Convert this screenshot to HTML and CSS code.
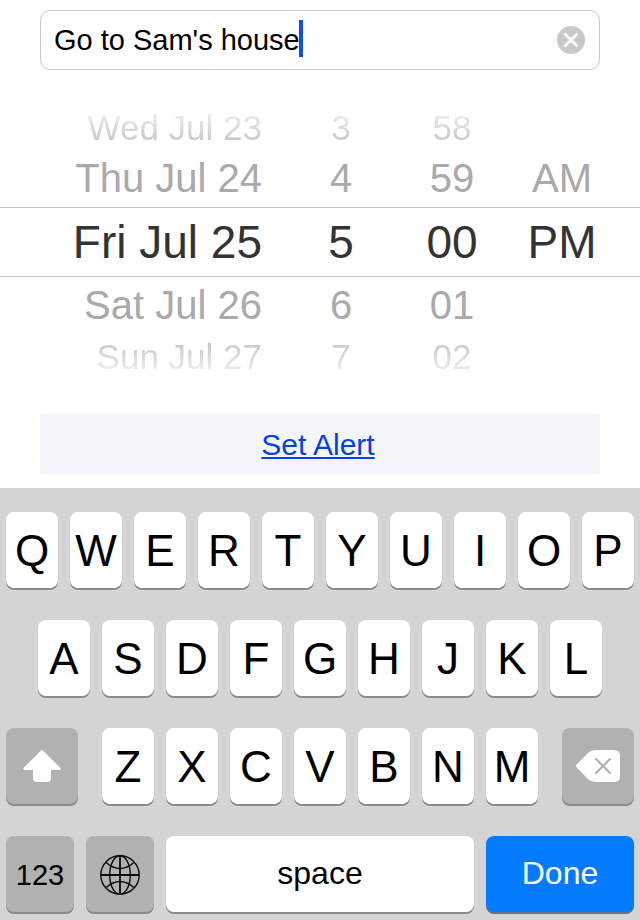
FILE: index.html
```html
<!DOCTYPE html>
<html lang="en">
<head>
<meta charset="utf-8">
<meta name="viewport" content="width=device-width, initial-scale=1">
<title>Reminder</title>
<link rel="stylesheet" href="styles.css">
</head>
<body>
<main class="form">
  <div class="field">
    <input class="field-input" type="text" aria-label="Reminder" value="Go to Sam's house">
    <span class="caret"></span>
    <button class="clear" type="button" aria-label="Clear text">
      <svg width="28" height="28" viewBox="0 0 28 28"><circle cx="14" cy="14" r="14" fill="#c8c8c8"/><path d="M7.500 7.500 20.500 20.500M20.500 7.500 7.500 20.500" stroke="#fff" stroke-width="2.800"/></svg>
    </button>
  </div>

  <div class="picker" role="group" aria-label="Date and time">
    <div class="wheel wheel-date">
      <button type="button" class="far far-top">Wed Jul 23</button>
      <button type="button" class="near">Thu Jul 24</button>
      <button type="button" class="current">Fri Jul 25</button>
      <button type="button" class="near">Sat Jul 26</button>
      <button type="button" class="far far-bottom">Sun Jul 27</button>
    </div>
    <div class="wheel">
      <button type="button" class="far far-top">3</button>
      <button type="button" class="near">4</button>
      <button type="button" class="current">5</button>
      <button type="button" class="near">6</button>
      <button type="button" class="far far-bottom">7</button>
    </div>
    <div class="wheel">
      <button type="button" class="far far-top">58</button>
      <button type="button" class="near">59</button>
      <button type="button" class="current">00</button>
      <button type="button" class="near">01</button>
      <button type="button" class="far far-bottom">02</button>
    </div>
    <div class="wheel">
      <span class="far"></span>
      <button type="button" class="near">AM</button>
      <button type="button" class="current">PM</button>
    </div>
  </div>

  <div class="alert"><a href="#alert">Set Alert</a></div>
</main>

<section class="keyboard" aria-label="Keyboard">
  <div class="row">
    <button class="key">Q</button><button class="key">W</button><button class="key">E</button><button class="key">R</button><button class="key">T</button><button class="key">Y</button><button class="key">U</button><button class="key">I</button><button class="key">O</button><button class="key">P</button>
  </div>
  <div class="row row-home">
    <button class="key">A</button><button class="key">S</button><button class="key">D</button><button class="key">F</button><button class="key">G</button><button class="key">H</button><button class="key">J</button><button class="key">K</button><button class="key">L</button>
  </div>
  <div class="row row-lower">
    <button class="key key-gray key-shift" aria-label="Shift">
      <svg width="38" height="32" viewBox="0 0 38 32"><path d="M18 .600Q19-.400 20 .600L37.400 17.800Q38.400 19.500 36.500 20H28V28Q28 32 24 32H14Q10 32 10 28V20H1.500Q-.400 19.500 .600 17.800Z" fill="#fff"/></svg>
    </button>
    <button class="key">Z</button><button class="key">X</button><button class="key">C</button><button class="key">V</button><button class="key">B</button><button class="key">N</button><button class="key">M</button>
    <button class="key key-gray key-delete" aria-label="Delete">
      <svg width="44" height="32" viewBox="0 0 44 32"><path d="M.700 14.500 12 3Q15 0 19 0H38Q44 0 44 6V26Q44 32 38 32H19Q15 32 12 29L.700 17.500Q-.500 16 .700 14.500Z" fill="#fff"/><path d="M20 9 34 23M34 9 20 23" stroke="#b1b1b1" stroke-width="2.200" stroke-linecap="round"/></svg>
    </button>
  </div>
  <div class="row row-bottom">
    <button class="key key-gray key-word">123</button>
    <button class="key key-gray" aria-label="Next keyboard">
      <svg width="40" height="40" viewBox="0 0 40 40" fill="none" stroke="#0a0a0a" stroke-width="1.400"><circle cx="20" cy="20" r="19.200"/><ellipse cx="20" cy="20" rx="10.300" ry="19.200"/><path d="M20 1V39M1 20H39" stroke-width="1.800"/><path d="M6 7.500Q20 19.500 34 7.500M6 32.500Q20 20.500 34 32.500"/></svg>
    </button>
    <button class="key key-word key-raised">space</button>
    <button class="key key-word key-raised key-done">Done</button>
  </div>
</section>
</body>
</html>
```
FILE: styles.css
```css
* {
  box-sizing: border-box;
}

body {
  margin: 0;
  min-height: 100vh;
  display: flex;
  flex-direction: column;
  background: #fff;
  color: #000;
  font-family: "Liberation Sans", Arial, sans-serif;
}

button,
input {
  font-family: inherit;
  color: inherit;
  border: 0;
  padding: 0;
  margin: 0;
  background: none;
}

svg {
  display: block;
}

.form {
  padding: 10px 0 14px;
}

.field {
  position: relative;
  display: flex;
  align-items: center;
  height: 60px;
  margin: 0 40px;
  padding: 0 14px 0 13px;
  border: 1px solid #c8c8c8;
  border-radius: 10px;
}

.field-input {
  flex: 1;
  min-width: 0;
  height: 56px;
  font-size: 29px;
  outline: 0;
}

.caret {
  position: absolute;
  left: 258px;
  top: 9px;
  width: 4px;
  height: 37px;
  background: #1450dc;
}

.picker {
  display: grid;
  grid-template-columns: 262fr 158fr 64fr 156fr;
  margin-top: 35px;
}

.wheel {
  display: flex;
  flex-direction: column;
  white-space: nowrap;
}

.wheel > * {
  display: flex;
  align-items: center;
  justify-content: center;
}

.wheel-date > * {
  justify-content: flex-end;
}

.far {
  height: 45px;
  font-size: 35px;
}

.far-top {
  color: transparent;
  background: linear-gradient(#e9e9e9 25%, #c8c8c8 80%);
  background-clip: text;
}

.far-bottom {
  color: transparent;
  background: linear-gradient(#c8c8c8 20%, #e9e9e9 75%);
  background-clip: text;
}

.near {
  height: 57px;
  font-size: 40px;
  color: #aaa;
}

.current {
  height: 70px;
  font-size: 46px;
  color: #333;
  border-top: 1px solid #c8c8c8;
  border-bottom: 1px solid #c8c8c8;
}

.alert {
  display: flex;
  align-items: center;
  justify-content: center;
  height: 60px;
  margin: 35px 40px 0;
  padding: 2px 4px 0 0;
  background: #f4f6fb;
  font-size: 30px;
}

.alert a {
  color: #0540e0;
  text-decoration-thickness: 2px;
  text-underline-offset: 2px;
  text-decoration-skip-ink: none;
}

.keyboard {
  flex: 1;
  display: flex;
  flex-direction: column;
  gap: 32px;
  padding: 24px 6px 8px;
  background: #d4d4d4;
}

.row {
  display: grid;
  grid-template-columns: repeat(10, 1fr);
  gap: 12px;
}

.row-home {
  grid-template-columns: repeat(9, 1fr);
  padding: 0 32px;
}

.row-lower {
  grid-template-columns: 84fr repeat(7, 52fr) 84fr;
}

.row-bottom {
  grid-template-columns: 68fr 68fr 308fr 148fr;
}

.key {
  display: flex;
  align-items: center;
  justify-content: center;
  min-width: 0;
  height: 76px;
  padding-top: 2px;
  border-radius: 8px;
  background: #fff;
  box-shadow: 0 2px 0 #8a8a8a;
  font-size: 44px;
}

.key-gray {
  background: #b1b1b1;
}

.key-shift {
  margin-right: 12px;
}

.key-delete {
  margin-left: 12px;
}

.key-shift,
.key-delete {
  padding-top: 0;
}

.key-word {
  font-size: 32px;
}

.key-gray.key-word {
  font-size: 29px;
}

.key-raised {
  padding-bottom: 4px;
}

.key-done {
  background: #057bff;
  color: #fff;
  box-shadow: 0 2px 0 #6b747e;
}
```
